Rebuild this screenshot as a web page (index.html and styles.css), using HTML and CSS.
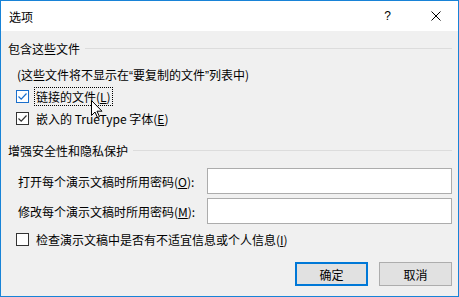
FILE: index.html
```html
<!DOCTYPE html>
<html lang="zh-CN">
<head>
  <meta charset="UTF-8" />
  <title>选项</title>
  <link rel="stylesheet" href="styles.css">
</head>
<body>
  <div class="dialog">
    <div class="titlebar">
      <span class="title">选项</span>
      <span class="help">?</span>
      <svg class="close" width="10" height="10" viewBox="0 0 10 10">
        <path d="M0.5 0.5 L9.5 9.5 M9.5 0.5 L0.5 9.5" stroke="#000" stroke-width="1" fill="none" />
      </svg>
    </div>

    <div class="content">
      <div class="group-head">
        <span>包含这些文件</span>
        <div class="rule"></div>
      </div>
      <div class="note">(这些文件将不显示在<span class="q">“</span>要复制的文件<span class="q">”</span>列表中)</div>

      <div class="check-row first">
        <span class="box hot">
          <svg width="11" height="11" viewBox="0 0 11 11"><path d="M1.5 5.5 L4.2 8.2 L9.5 2.5" stroke="#1a6fcc" stroke-width="1.2" fill="none" /></svg>
        </span>
        <span class="label focus">链接的文件(<u>L</u>)</span>
      </div>
      <div class="check-row">
        <span class="box">
          <svg width="11" height="11" viewBox="0 0 11 11"><path d="M1.5 5.5 L4.2 8.2 L9.5 2.5" stroke="#333" stroke-width="1.2" fill="none" /></svg>
        </span>
        <span class="label">嵌入的 TrueType 字体(<u>E</u>)</span>
      </div>

      <div class="group-head second">
        <span>增强安全性和隐私保护</span>
        <div class="rule"></div>
      </div>

      <div class="field-row">
        <span class="field-label">打开每个演示文稿时所用密码(<u>O</u>):</span>
        <div class="textbox"></div>
      </div>
      <div class="field-row next">
        <span class="field-label">修改每个演示文稿时所用密码(<u>M</u>):</span>
        <div class="textbox"></div>
      </div>

      <div class="check-row last">
        <span class="box"></span>
        <span class="label">检查演示文稿中是否有不适宜信息或个人信息(<u>I</u>)</span>
      </div>

      <div class="buttons">
        <button class="btn default">确定</button>
        <button class="btn">取消</button>
      </div>
    </div>

    <!-- mouse pointer sitting over the first option -->
    <svg class="pointer" width="12" height="19" viewBox="0 0 12 19">
      <path d="M0.5 0.5 L0.5 15.5 L4 12 L6.5 17.5 L8.5 16.6 L6 11.2 L11 11.2 Z" fill="#fff" stroke="#000" stroke-width="1" />
    </svg>
  </div>
</body>
</html>
```

FILE: styles.css
```css
* {
  margin: 0; padding: 0; box-sizing: border-box;
}
body {
  width: 459px;
  height: 297px;
  font-family: "Noto Sans CJK SC", "Noto Sans", sans-serif;
  font-size: 12px;
  color: #000;
  overflow: hidden;
}

.dialog {
  position: relative;
  width: 459px;
  height: 297px;
  border: 1px solid #1883d7;
  background-color: #f0f0f0;
  display: flex;
  flex-direction: column;
}

.titlebar {
  height: 30px;
  background-color: #fff;
  display: flex;
  align-items: center;
  padding: 0 0 0 8px;
}
.title {
  flex: 1;
  font-size: 12px;
}
.help {
  font-family: "Liberation Sans", sans-serif;
  font-size: 12px;
  margin-right: 40px;
}
.close {
  margin-right: 17px;
}

.content {
  padding: 0 6px 0 7px;
  display: flex;
  flex-direction: column;
}

.group-head {
  display: flex;
  align-items: center;
  height: 18px;
  margin-top: 8px;
}
.group-head.second {
  margin-top: 13px;
}
.group-head span {
  white-space: nowrap;
  margin-right: 5px;
}
.rule {
  flex: 1;
  height: 1px;
  background-color: #dcdcdc;
}

.note {
  height: 18px;
  line-height: 18px;
  margin: 9px 0 0 9px;
}
.q {
  font-family: "Liberation Sans", sans-serif;
}

.check-row {
  display: flex;
  align-items: center;
  height: 19px;
  margin: 3px 0 0 8px;
}
.check-row.first {
  margin-top: 3px;
}
.check-row.last {
  margin-top: 6px;
}
.box {
  width: 13px;
  height: 13px;
  border: 1px solid #333;
  background-color: #fff;
  display: flex;
  align-items: center;
  justify-content: center;
  margin-right: 5px;
}
.box.hot {
  border-color: #1a6fcc;
}
.label {
  padding: 0 1px;
  line-height: 17px;
  border: 1px dotted transparent;
}
.label.focus {
  border-color: #000;
}
.label u, .field-label u {
  text-underline-offset: 1px;
}

.field-row {
  display: flex;
  align-items: center;
  margin: 9px 0 0 10px;
}
.field-row.next {
  margin-top: 4px;
}
.field-label {
  width: 189px;
  white-space: nowrap;
}
.textbox {
  flex: 1;
  height: 26px;
  border: 1px solid #acacac;
  background-color: #fff;
}

.buttons {
  display: flex;
  justify-content: flex-end;
  gap: 11px;
  margin-top: 13px;
}
.btn {
  width: 73px;
  height: 24px;
  font-family: "Noto Sans CJK SC", sans-serif;
  font-size: 12px;
  background-color: #e1e1e1;
  border: 1px solid #adadad;
  color: #000;
}
.btn.default {
  border: 2px solid #0078d7;
}

.pointer {
  position: absolute;
  left: 90px;
  top: 99px;
}
```
